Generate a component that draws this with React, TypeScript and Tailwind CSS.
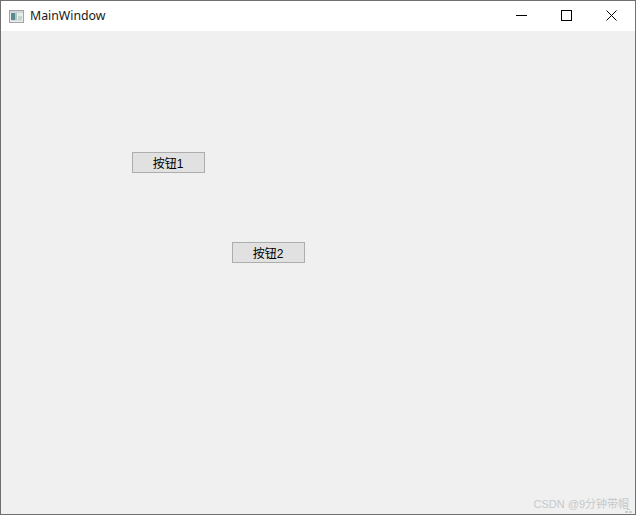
const CJK = "font-['Liberation_Sans','Noto_Sans_CJK_SC',sans-serif]";

function AppIcon() {
  return (
    <svg width="15" height="13" viewBox="0 0 15 13" className="shrink-0">
      <rect x="0.5" y="0.5" width="14" height="12" fill="#ededed" stroke="#a3a3a3" />
      <rect x="1" y="1" width="13" height="2" fill="#d3d6d8" />
      <rect x="2" y="3" width="4" height="7" fill="#5a8a90" />
      <rect x="6" y="3" width="2" height="7" fill="#a9c7c4" />
      <rect x="9" y="3" width="4" height="3" fill="#e6ebe8" />
      <rect x="9" y="6" width="4" height="4" fill="#c3d6cb" />
      <rect x="2" y="10" width="11" height="1" fill="#dcdcdc" />
    </svg>
  );
}

function WinButton({ children }: { children: React.ReactNode }) {
  return <div className="h-[30px] w-[45px] pl-[17px] pt-[9px]">{children}</div>;
}

function PushButton({ label, className }: { label: string; className: string }) {
  return (
    <button
      className={`flex h-[21px] w-[73px] items-center justify-center border border-[#adadad] bg-[#e1e1e1] pt-[2px] pr-[1px] text-[12px] leading-none text-black ${className}`}
    >
      {label}
    </button>
  );
}

export default function App() {
  return (
    <div className={`relative flex h-[515px] w-[636px] flex-col overflow-hidden border border-[#6f6f6f] bg-[#f0f0f0] ${CJK}`}>
      {/* title bar */}
      <div className="flex h-[30px] shrink-0 items-center bg-white pl-[8px] pr-[1px]">
        <AppIcon />
        <span className="ml-[6px] font-['Noto_Sans',sans-serif] text-[12.3px] text-[#1a1a1a]">MainWindow</span>
        <div className="ml-auto flex">
          <WinButton>
            <svg width="11" height="11" viewBox="0 0 11 11" className="block">
              <path d="M0 5.5H11" stroke="#000" strokeWidth="1" />
            </svg>
          </WinButton>
          <WinButton>
            <svg width="11" height="11" viewBox="0 0 11 11" className="block">
              <rect x="0.5" y="0.5" width="10" height="10" fill="none" stroke="#000" />
            </svg>
          </WinButton>
          <WinButton>
            <svg width="11" height="11" viewBox="0 0 11 11" className="block">
              <path d="M0.5 0.5L10.5 10.5M10.5 0.5L0.5 10.5" stroke="#000" strokeWidth="1" />
            </svg>
          </WinButton>
        </div>
      </div>

      {/* central widget */}
      <div className="flex flex-1 flex-col items-start">
        <PushButton label="按钮1" className="ml-[131px] mt-[121px]" />
        <PushButton label="按钮2" className="ml-[231px] mt-[69px]" />
      </div>

      {/* watermark */}
      <span className="absolute bottom-[4px] right-[6px] text-[11px] leading-none text-[#c8c8c8]">CSDN @9分钟带帽</span>
      <svg width="7" height="4" viewBox="0 0 7 4" className="absolute bottom-[1px] right-[3px]">
        <path d="M2 0h3v1H2zM0 2h3v2H0zM4 2h3v2H4z" fill="#cfcfcf" />
      </svg>
    </div>
  );
}
